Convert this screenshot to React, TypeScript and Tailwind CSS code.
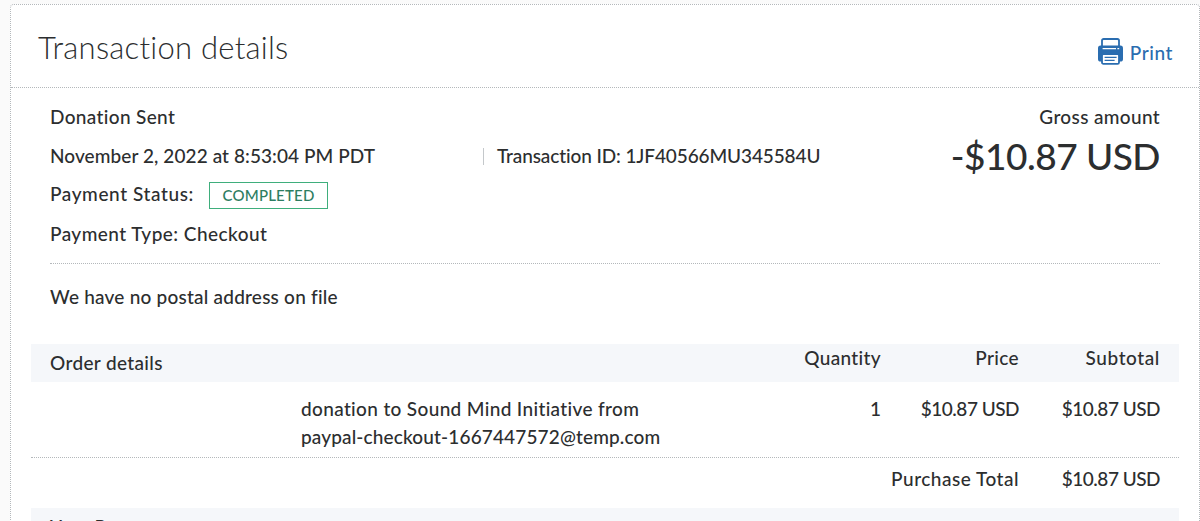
import React from 'react';

type OrderItem = {
  title: string;
  email: string;
  quantity: number;
  price: string;
  subtotal: string;
};

const items: OrderItem[] = [
  {
    title: 'donation to Sound Mind Initiative from',
    email: 'paypal-checkout-1667447572@temp.com',
    quantity: 1,
    price: '$10.87 USD',
    subtotal: '$10.87 USD',
  },
];

const PrintIcon: React.FC = () => {
  return (
    <svg width="25" height="27" viewBox="0 0 25 27" fill="none">
      <rect x="4" y="1" width="17" height="10" rx="1.6" stroke="#2a6db0" strokeWidth="1.8" />
      <rect x="0" y="7.6" width="25" height="16" rx="2.6" fill="#2a6db0" />
      <path d="M4.6 10.7h13.4M19.4 10.7h1.8" stroke="#fff" strokeWidth="1.3" />
      <rect x="4" y="16.2" width="17" height="9.6" rx="1.4" fill="#fff" stroke="#2a6db0" strokeWidth="1.8" />
      <path d="M6.6 19.4h12M6.6 22.4h10" stroke="#2a6db0" strokeWidth="1.3" />
    </svg>
  );
};

const App: React.FC = () => {
  return (
    <div className="h-[521px] overflow-hidden bg-[#fafafa] pt-1 pl-2.5 font-['Lato',sans-serif] text-[19px] leading-7 font-medium tracking-[0.35px] text-[#2c2e2f]">
      <div className="h-[540px] rounded-t-[4px] border border-dotted border-[#b4b8bb] bg-white">
        <div className="flex h-[83px] items-center justify-between border-b border-dotted border-[#b4b8bb] pr-[26px] pl-[27px]">
          <h1 className="pt-0.5 text-[31px] leading-10 font-light tracking-[0.25px]">
            Transaction details
          </h1>
          <button className="flex items-center gap-[7px] pt-[11px] tracking-[0.6px] text-[#2a6db0]">
            <PrintIcon />
            <span className="pt-0.5">Print</span>
          </button>
        </div>

        <div className="mx-[39px] flex h-44 justify-between border-b border-dotted border-[#b4b8bb] pt-[15px]">
          <div className="flex flex-col gap-[11px]">
            <div>Donation Sent</div>
            <div className="flex">
              <div className="w-[433px] tracking-[0.08px]">November 2, 2022 at 8:53:04 PM PDT</div>
              <div className="flex items-center gap-[13px]">
                <span className="h-[17px] w-px bg-[#c4c8cb]" />
                <span className="tracking-[-0.11px]">Transaction ID: 1JF40566MU345584U</span>
              </div>
            </div>
            <div className="flex h-7 items-center gap-[15px]">
              <span className="w-36 pb-0.5 tracking-[0.6px] whitespace-nowrap">Payment Status:</span>
              <span className="flex h-[27px] w-[119px] items-center justify-center border border-[#3fae7c] text-[15px] tracking-[0.2px] text-[#2d7d61]">
                COMPLETED
              </span>
            </div>
            <div className="tracking-[0.45px]">Payment Type: Checkout</div>
          </div>
          <div className="text-right">
            <div>Gross amount</div>
            <div className="text-[37px] leading-[50px] tracking-[-0.5px]">-$10.87 USD</div>
          </div>
        </div>

        <div className="px-[39px] pt-[19px] pb-[33px] tracking-[0.22px]">
          We have no postal address on file
        </div>

        <div className="mx-5">
          <div className="flex h-[38px] bg-[#f5f7fa] px-[19px]">
            <div className="flex-1 pt-[5px]">Order details</div>
            <div className="w-[138px] text-right">Quantity</div>
            <div className="w-[138px] text-right">Price</div>
            <div className="w-[141px] text-right tracking-[0.6px]">Subtotal</div>
          </div>

          {items.map((item) => (
            <div
              key={item.email}
              className="flex h-[76px] border-b border-dotted border-[#b4b8bb] px-[19px] pt-[13px]">
              <div className="flex-1 pl-[251px] whitespace-nowrap">
                <div>{item.title}</div>
                <div className="tracking-[0.14px]">{item.email}</div>
              </div>
              <div className="w-[138px] text-right tracking-normal">{item.quantity}</div>
              <div className="w-[138px] text-right tracking-[-0.5px]">{item.price}</div>
              <div className="w-[141px] text-right tracking-[-0.5px]">{item.subtotal}</div>
            </div>
          ))}

          <div className="flex h-[50px] justify-end px-[19px] pt-[7px]">
            <div className="tracking-[0.5px]">Purchase Total</div>
            <div className="w-[141px] text-right tracking-[-0.5px]">$10.87 USD</div>
          </div>

          <div className="h-[38px] bg-[#f5f7fa] px-[19px] pt-[5px]">Your Payment</div>
        </div>
      </div>
    </div>
  );
};

export default App;
